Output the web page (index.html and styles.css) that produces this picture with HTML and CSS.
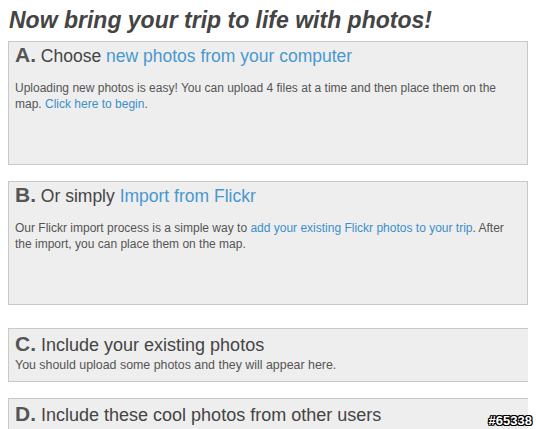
FILE: index.html
```html
<!DOCTYPE html>
<html lang="en">
<head>
    <meta charset="UTF-8">
    <title>Add photos</title>
    <link rel="stylesheet" href="styles.css">
</head>
<body>
    <h1 class="page-title">Now bring your trip to life with photos!</h1>

    <div class="step step-tall">
        <h2 class="step-title"><span class="step-letter">A.</span> Choose <a href="#">new photos from your computer</a></h2>
        <p class="step-text">Uploading new photos is easy! You can upload 4 files at a time and then place them on the map. <a href="#">Click here to begin</a>.</p>
    </div>

    <div class="step step-tall">
        <h2 class="step-title"><span class="step-letter">B.</span> Or simply <a href="#">Import from Flickr</a></h2>
        <p class="step-text">Our Flickr import process is a simple way to <a href="#">add your existing Flickr photos to your trip</a>. After the import, you can place them on the map.</p>
    </div>

    <div class="more-steps">
        <div class="step step-wide">
            <h2 class="step-title"><span class="step-letter">C.</span> Include your existing photos</h2>
            <p class="step-note">You should upload some photos and they will appear here.</p>
        </div>

        <div class="step step-wide">
            <h2 class="step-title"><span class="step-letter">D.</span> Include these cool photos from other users</h2>
            <p class="step-note">&nbsp;</p>
        </div>
    </div>

    <span class="tag">#65338</span>
</body>
</html>
```

FILE: styles.css
```css
html {
    overflow: hidden;
}

body {
    margin: 8px;
    font-family: "Liberation Sans", Arial, sans-serif;
    color: #555;
    background: #fff;
}

a {
    color: #3d8fca;
    text-decoration: none;
}

.page-title {
    margin: 0 0 8px 1px;
    font-size: 23px;
    line-height: 25px;
    font-style: italic;
    font-weight: bold;
    color: #444;
}

.step {
    background: #eee;
    border: 1px solid #c9c9c9;
    padding: 0 6px;
    margin-bottom: 16px;
}

.step-tall {
    min-height: 124px;
    box-sizing: border-box;
}

.more-steps {
    margin-top: 23px;
}

.step-wide {
    margin-right: -30px;
}

.step-title {
    margin: 0;
    padding-top: 1px;
    font-size: 17.5px;
    line-height: 24px;
    font-weight: normal;
    color: #444;
}

.step-title a {
    color: #4898d0;
}

.step-wide .step-title {
    padding-top: 3px;
    font-size: 18px;
}

.step-letter {
    font-size: 21px;
    font-weight: bold;
    color: #555;
}

.step-text {
    margin: 12px 0 0;
    font-size: 12px;
    line-height: 16px;
}

.step-note {
    margin: 0 0 8px;
    font-size: 12.4px;
    line-height: 16px;
}

.tag {
    position: absolute;
    top: 413px;
    right: 4px;
    font-size: 13px;
    font-weight: bold;
    color: #fff;
    text-shadow: 1px 0 0 #000, -1px 0 0 #000, 0 1px 0 #000, 0 -1px 0 #000,
        1px 1px 0 #000, -1px -1px 0 #000, 1px -1px 0 #000, -1px 1px 0 #000;
}
```
